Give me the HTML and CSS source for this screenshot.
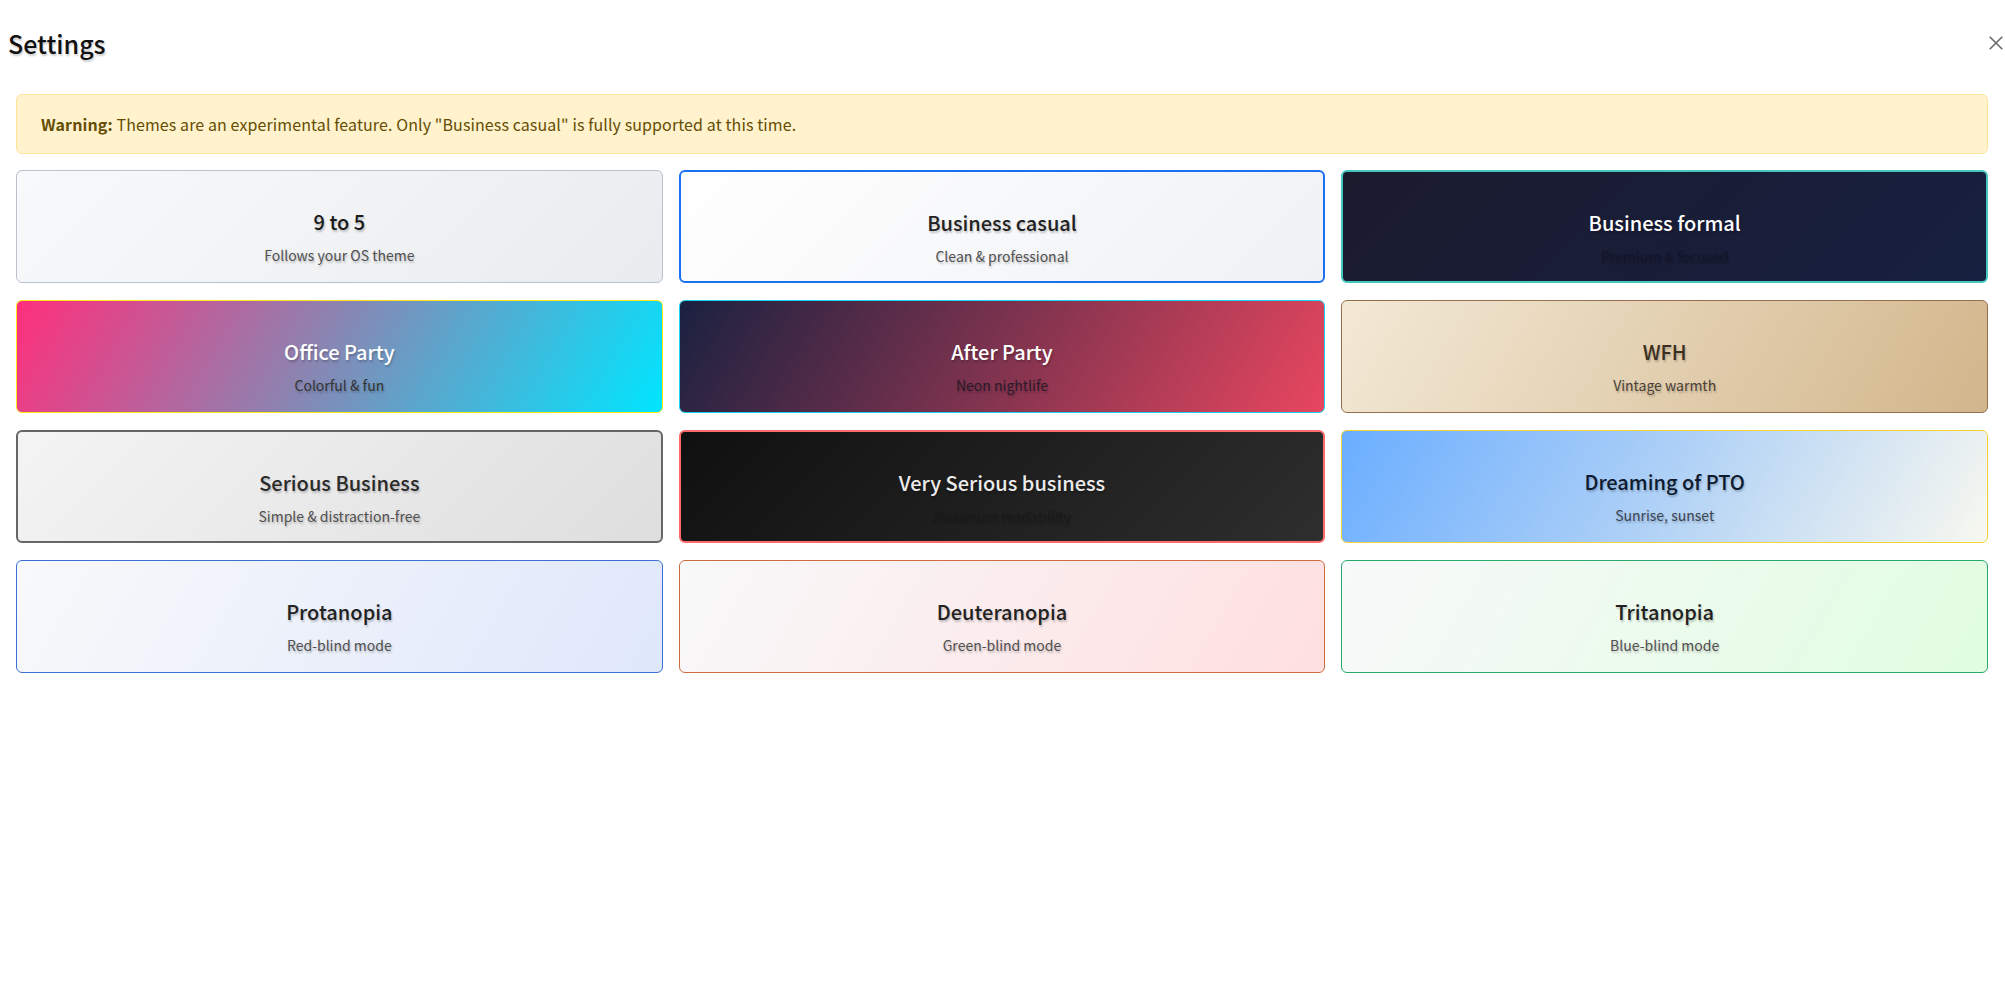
FILE: index.html
```html
<!DOCTYPE html>
<html lang="en">
<head>
<meta charset="utf-8">
<title>Settings</title>
<link rel="stylesheet" href="styles.css">
</head>
<body>
<div class="settings">
  <header class="header">
    <h1 class="title">Settings</h1>
    <button class="close" aria-label="Close">
      <svg width="14" height="14" viewBox="0 0 14 14"><path d="M0.7 0.7 L13.3 13.3 M13.3 0.7 L0.7 13.3" stroke="#6b6b6b" stroke-width="1.6" fill="none"/></svg>
    </button>
  </header>
  <div class="content">
    <div class="warning"><strong>Warning:</strong> Themes are an experimental feature. Only "Business casual" is fully supported at this time.</div>
    <div class="themes">
      <div class="card t-95"><div class="name">9 to 5</div><div class="desc">Follows your OS theme</div></div>
      <div class="card t-casual"><div class="name">Business casual</div><div class="desc">Clean &amp; professional</div></div>
      <div class="card t-formal"><div class="name">Business formal</div><div class="desc">Premium &amp; focused</div></div>
      <div class="card t-office"><div class="name">Office Party</div><div class="desc">Colorful &amp; fun</div></div>
      <div class="card t-after"><div class="name">After Party</div><div class="desc">Neon nightlife</div></div>
      <div class="card t-wfh"><div class="name">WFH</div><div class="desc">Vintage warmth</div></div>
      <div class="card t-serious"><div class="name">Serious Business</div><div class="desc">Simple &amp; distraction-free</div></div>
      <div class="card t-very"><div class="name">Very Serious business</div><div class="desc">Maximum readability</div></div>
      <div class="card t-pto"><div class="name">Dreaming of PTO</div><div class="desc">Sunrise, sunset</div></div>
      <div class="card t-prot"><div class="name">Protanopia</div><div class="desc">Red-blind mode</div></div>
      <div class="card t-deut"><div class="name">Deuteranopia</div><div class="desc">Green-blind mode</div></div>
      <div class="card t-trit"><div class="name">Tritanopia</div><div class="desc">Blue-blind mode</div></div>
    </div>
  </div>
</div>
</body>
</html>
```
FILE: styles.css
```css
* { box-sizing: border-box; }
html, body { margin: 0; padding: 0; background: #fff; }
body {
  font-family: "Noto Sans CJK JP", "Noto Sans", sans-serif;
  color: #1a1a1a;
}
.header {
  display: flex;
  align-items: center;
  justify-content: space-between;
  padding: 27px 2px 0 8px;
  height: 59px;
}
.title {
  margin: 0;
  font-size: 25px;
  line-height: 32px;
  font-weight: 500;
  color: #111;
  text-shadow: 1px 2px 2px rgba(0,0,0,0.2);
}
.close {
  border: 0;
  background: none;
  padding: 0;
  width: 14px;
  height: 14px;
  display: flex;
  cursor: pointer;
}
.content {
  padding: 35px 17px 0 16px;
}
.warning {
  background: #fff2cc;
  border: 1px solid #ffe49a;
  border-radius: 6px;
  color: #664d03;
  font-size: 16px;
  letter-spacing: 0.1px;
  line-height: 24px;
  padding: 17px 24px;
}
.warning strong { font-weight: 700; }
.themes {
  margin-top: 16px;
  display: grid;
  grid-template-columns: repeat(3, 1fr);
  column-gap: 16px;
  row-gap: 17px;
}
.card {
  height: 113px;
  border-radius: 6px;
  border: 1px solid #c4ccd6;
  padding-top: 37px;
  display: flex;
  flex-direction: column;
  align-items: center;
  text-shadow: 1px 2px 2px rgba(0,0,0,0.22);
}
.name {
  font-size: 20px;
  line-height: 28px;
  font-weight: 500;
}
.desc {
  margin-top: 9px;
  font-size: 14px;
  line-height: 20px;
  color: #505050;
}
.t-95 { background: linear-gradient(135deg, #f8f9fa, #e9ecef); border-color: #b9c2cc; }
.t-95 .name { color: #1a1a1a; }
.t-casual { background: linear-gradient(135deg, #ffffff, #eff1f4); border: 2px solid #1a6ff2; }
.t-casual .name { color: #222; }
.t-formal { background: linear-gradient(135deg, #1b1b2e, #172040); border: 2px solid #45c7c0; }
.t-formal .name { color: #fff; }
.t-formal .desc { color: #14152a; }
.t-office { background: linear-gradient(120deg, #ff2f7b, #8e82b0 45%, #00e6ff); border-color: #ffe619; }
.t-office .name { color: #fff; }
.t-office .desc { color: #333; }
.t-after { background: linear-gradient(120deg, #1a2140, #8a3550 55%, #e8465f); border-color: #17d4f2; }
.t-after .name { color: #fff; }
.t-after .desc { color: #2a1a2a; }
.t-wfh { background: linear-gradient(120deg, #f3e9d6, #d2b68b); border-color: #957050; }
.t-wfh .name { color: #3b2f22; }
.t-wfh .desc { color: #4a4033; }
.t-serious { background: linear-gradient(135deg, #f4f4f4, #dedede); border: 2px solid #666; }
.t-serious .name { color: #2a2a2a; }
.t-very { background: linear-gradient(135deg, #101010, #2e2e2e); border: 2px solid #ff6b6b; }
.t-very .name { color: #ececec; }
.t-very .desc { color: #1a1a1a; }
.t-pto { background: linear-gradient(120deg, #6aaeff, #a8cdf7 45%, #f8f8ef); border-color: #f4d433; }
.t-pto .name { color: #0d1a30; }
.t-pto .desc { color: #3a4454; }
.t-prot { background: linear-gradient(120deg, #f8f9fa, #dfe7fb); border-color: #3b6fd4; }
.t-prot .name { color: #222; }
.t-deut { background: linear-gradient(120deg, #f8f9fa, #ffdfe0); border-color: #d06b3e; }
.t-deut .name { color: #222; }
.t-trit { background: linear-gradient(120deg, #f8f9fa, #e0fde0); border-color: #28a96e; }
.t-trit .name { color: #222; }
```
